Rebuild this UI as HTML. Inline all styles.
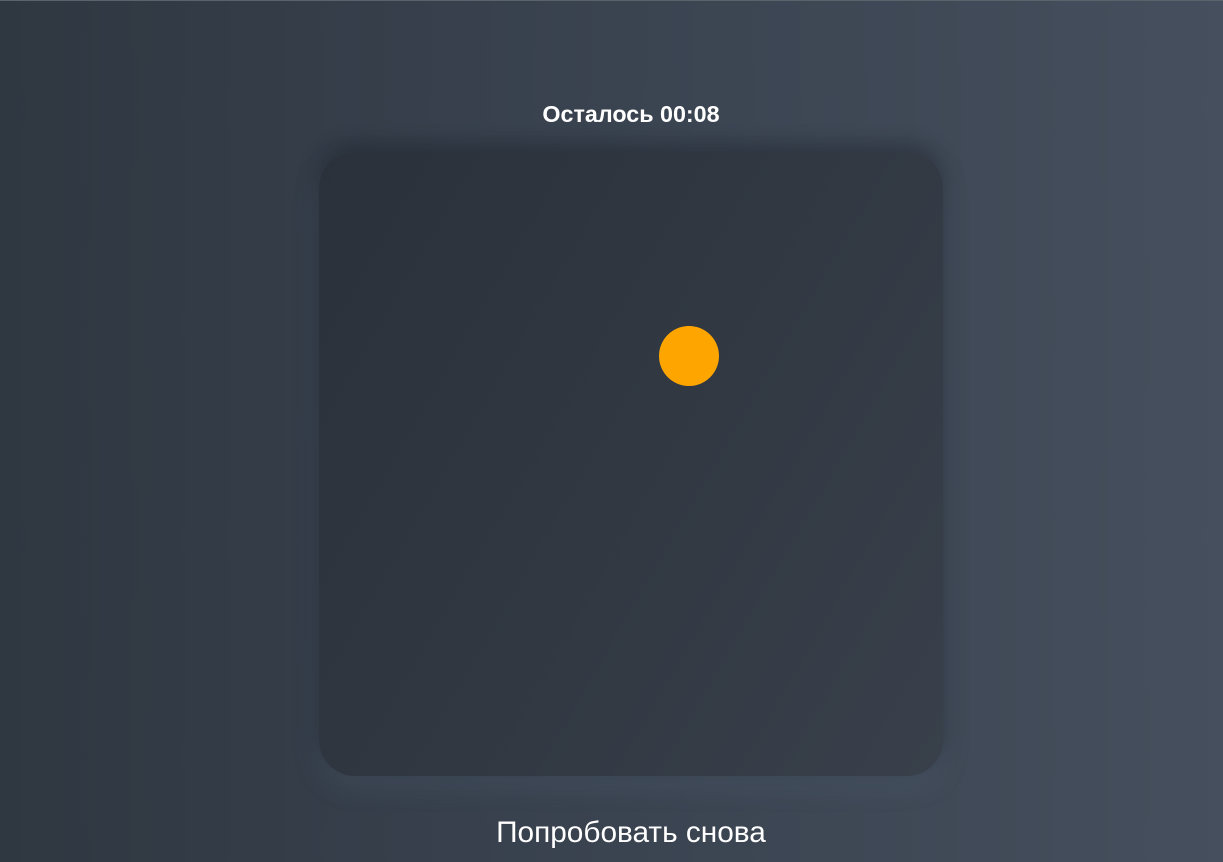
<!DOCTYPE html>
<html><head><meta charset="utf-8"><style>
html,body{margin:0;padding:0;width:1223px;height:862px;overflow:hidden}
body{background:linear-gradient(90deg,#2f3741 0%,#3a4350 50%,#454f5d 100%);font-family:"Liberation Sans",sans-serif;position:relative;border-top:1px solid #5a626c;box-sizing:border-box}
.t{position:absolute;top:100px;left:0;width:1262px;text-align:center;color:#fff;font-weight:bold;font-size:23.3px}
.card{position:absolute;left:319px;top:151px;width:624px;height:624px;border-radius:36px;background:linear-gradient(120deg,#2b313b 0%,#313842 50%,#39404b 100%);box-shadow:0 -6px 20px rgba(20,24,30,.45),0 10px 24px rgba(90,105,125,.35)}
.dot{position:absolute;left:659px;top:325px;width:60px;height:60px;border-radius:50%;background:#ffa500}
.b{position:absolute;top:815px;left:0;width:1262px;text-align:center;color:#fff;font-size:29.8px}
</style></head><body>
<div class="t">Осталось 00:08</div>
<div class="card"></div>
<div class="dot"></div>
<div class="b">Попробовать снова</div>
</body></html>
